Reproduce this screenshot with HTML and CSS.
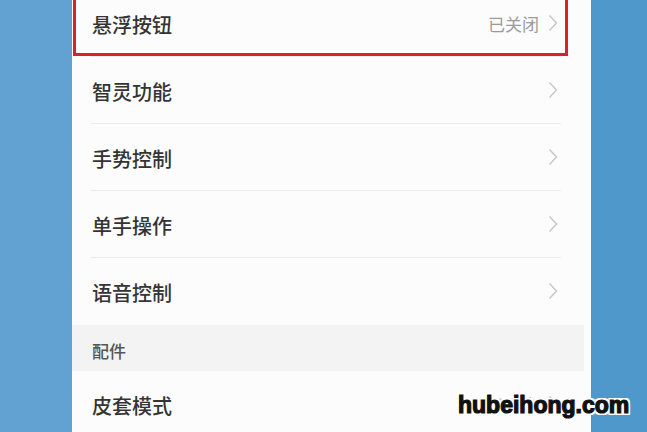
FILE: index.html
```html
<!DOCTYPE html>
<html>
<head>
  <title>辅助功能</title>
  <link rel="stylesheet" href="styles.css">
</head>
<body>
  <div class="page">
    <div class="side side-left"></div>

    <div class="screen">
      <ul class="list">
        <li class="row row-marked">
          <div class="row-inner">
            <span class="label">悬浮按钮</span>
            <span class="status">已关闭</span>
            <svg class="chevron" viewBox="0 0 10 18"><polyline points="1.5,1.5 8.5,9 1.5,16.5"/></svg>
          </div>
          <div class="mark"></div>
        </li>
        <li class="row">
          <div class="row-inner">
            <span class="label">智灵功能</span>
            <svg class="chevron" viewBox="0 0 10 18"><polyline points="1.5,1.5 8.5,9 1.5,16.5"/></svg>
          </div>
        </li>
        <li class="row">
          <div class="row-inner">
            <span class="label">手势控制</span>
            <svg class="chevron" viewBox="0 0 10 18"><polyline points="1.5,1.5 8.5,9 1.5,16.5"/></svg>
          </div>
        </li>
        <li class="row">
          <div class="row-inner">
            <span class="label">单手操作</span>
            <svg class="chevron" viewBox="0 0 10 18"><polyline points="1.5,1.5 8.5,9 1.5,16.5"/></svg>
          </div>
        </li>
        <li class="row row-last">
          <div class="row-inner">
            <span class="label">语音控制</span>
            <svg class="chevron" viewBox="0 0 10 18"><polyline points="1.5,1.5 8.5,9 1.5,16.5"/></svg>
          </div>
        </li>
      </ul>

      <div class="section">配件</div>

      <ul class="list">
        <li class="row row-last">
          <div class="row-inner">
            <span class="label">皮套模式</span>
            <span class="status">已开启</span>
            <svg class="chevron" viewBox="0 0 10 18"><polyline points="1.5,1.5 8.5,9 1.5,16.5"/></svg>
          </div>
        </li>
      </ul>
    </div>

    <div class="side side-right"></div>

    <!-- site watermark burned into the screenshot -->
    <div class="watermark">hubeihong.com</div>
  </div>
</body>
</html>
```

FILE: styles.css
```css
html, body {
  margin: 0;
  padding: 0;
  height: 100%;
  overflow: hidden;
}

body {
  font-family: "Noto Sans CJK SC", "Noto Sans", sans-serif;
}

.page {
  position: relative;
  display: flex;
  height: 432px;
}

.side-left {
  width: 72px;
  background-color: #62a2d3;
}

.side-right {
  flex: 1;
  background-color: #4f98cc;
}

.screen {
  width: 519px;
  background-color: #fcfcfc;
  overflow: hidden;
}

.list {
  list-style: none;
  margin: 0;
  padding: 0;
}

.list:first-child {
  margin-top: -10px;
}

.row {
  position: relative;
  height: 67px;
  padding: 0 30px 0 19px;
}

.row-inner {
  display: flex;
  align-items: center;
  height: 66px;
  padding: 0 3px 0 1px;
  border-bottom: 1px solid #ececec;
}

.row-last .row-inner {
  border-bottom-color: transparent;
}

.label {
  flex: 1;
  font-size: 20px;
  font-weight: 500;
  color: #343434;
  padding-top: 2px;
}

.status {
  font-size: 17px;
  color: #9b9b9b;
  margin-right: 9px;
}

.chevron {
  width: 10px;
  height: 18px;
  fill: none;
  stroke: #c6c6c6;
  stroke-width: 1.4;
}

.mark {
  position: absolute;
  left: 1px;
  right: 23px;
  top: 0;
  bottom: 1px;
  border: 3px solid #d9212d;
}

.section {
  height: 46px;
  margin-right: 7px;
  padding: 4px 0 0 20px;
  box-sizing: border-box;
  display: flex;
  align-items: center;
  background-color: #f3f3f3;
  font-size: 17px;
  font-weight: 500;
  color: #555;
}

.watermark {
  position: absolute;
  left: 458px;
  top: 392px;
  font-family: "Liberation Sans", Arial, sans-serif;
  font-weight: bold;
  font-size: 23px;
  color: #111;
  -webkit-text-stroke: 1.2px #111;
  text-shadow: 2px 0 0 #fff, -2px 0 0 #fff, 0 2px 0 #fff, 0 -2px 0 #fff,
    2px 2px 0 #fff, -2px -2px 0 #fff, 2px -2px 0 #fff, -2px 2px 0 #fff;
}
```
